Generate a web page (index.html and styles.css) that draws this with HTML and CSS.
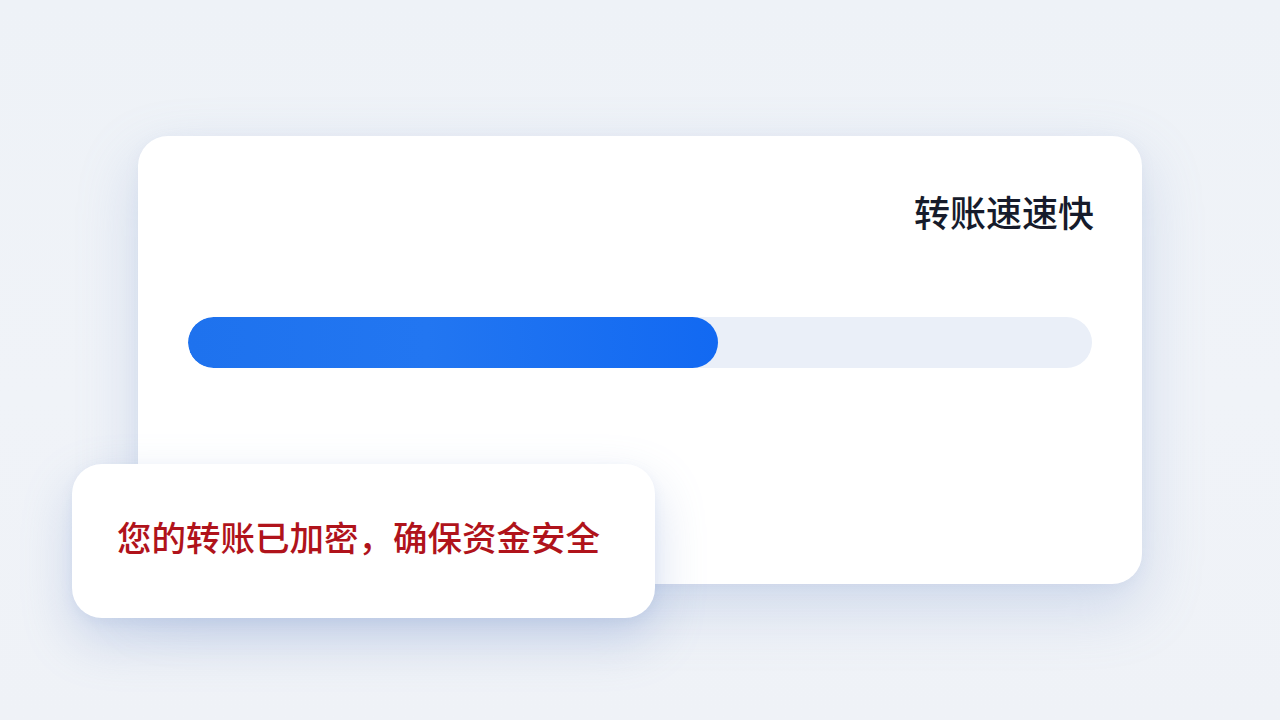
FILE: index.html
```html
<!DOCTYPE html>
<html lang="zh-CN">
<head>
<meta charset="utf-8">
<title>转账速速快</title>
<link rel="stylesheet" href="styles.css">
</head>
<body>
<div class="stage">
  <section class="card">
    <h1 class="card-title">转账速速快</h1>
    <div class="track">
      <div class="fill" style="width: 58.6%"></div>
    </div>
  </section>
  <div class="toast">
    <p class="toast-text">您的转账已加密，确保资金安全</p>
  </div>
</div>
</body>
</html>
```

FILE: styles.css
```css
* {
  box-sizing: border-box;
}

html, body {
  margin: 0;
  height: 100%;
}

body {
  background: linear-gradient(180deg, #eef2f7 0%, #f0f3f8 55%, #eff2f7 100%);
  font-family: "Noto Sans CJK SC", "Noto Sans", sans-serif;
  overflow: hidden;
}

.stage {
  position: relative;
  width: 1280px;
  height: 720px;
  padding: 136px 0 0 138px;
}

.card {
  width: 1004px;
  height: 448px;
  background: #ffffff;
  border-radius: 30px;
  padding: 52px 48px 0 50px;
  box-shadow: 0 24px 60px rgba(132, 160, 210, 0.3), 0 4px 14px rgba(150, 170, 210, 0.1);
  display: flex;
  flex-direction: column;
}

.card-title {
  margin: 0;
  align-self: flex-end;
  font-size: 36px;
  line-height: 47px;
  font-weight: 500;
  color: #161b2b;
}

.track {
  margin: 82px 2px 0 0;
  height: 51px;
  border-radius: 26px;
  background: #eaeff8;
  overflow: hidden;
}

.fill {
  height: 100%;
  border-radius: 26px;
  background: linear-gradient(90deg, #1e72ee 0%, #2276f1 45%, #1269f2 100%);
}

.toast {
  position: absolute;
  left: 72px;
  top: 464px;
  width: 583px;
  height: 154px;
  background: #ffffff;
  border-radius: 30px;
  box-shadow: 0 22px 50px rgba(120, 150, 205, 0.32), 0 4px 12px rgba(140, 165, 210, 0.12);
  display: flex;
  align-items: center;
  padding: 0 0 8px 45px;
}

.toast-text {
  margin: 0;
  font-size: 34.5px;
  line-height: 1.2;
  font-weight: 500;
  color: #b0131b;
  white-space: nowrap;
}
```
